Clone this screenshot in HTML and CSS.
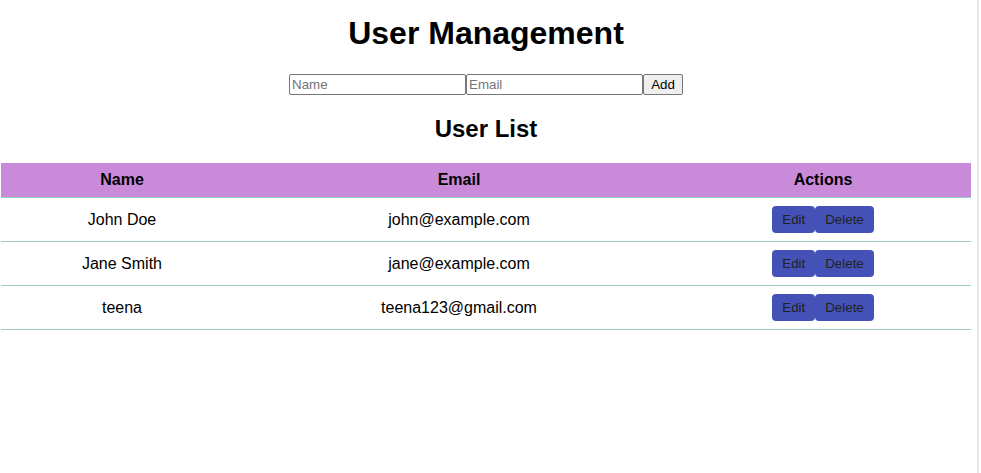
FILE: index.html
```html
<!DOCTYPE html>
<html lang="en">
<head>
<meta charset="utf-8">
<title>User Management</title>
<link rel="stylesheet" href="styles.css">
</head>
<body>
<div class="app">
  <h1 class="title">User Management</h1>
  <form class="add-form">
    <input class="field" type="text" placeholder="Name"><input class="field" type="email" placeholder="Email"><button class="add-btn" type="button">Add</button>
  </form>
  <h2 class="subtitle">User List</h2>
  <table class="users">
    <thead>
      <tr><th class="c-name">Name</th><th class="c-email">Email</th><th class="c-actions">Actions</th></tr>
    </thead>
    <tbody>
      <tr><td>John Doe</td><td>john@example.com</td><td><div class="actions"><button class="act">Edit</button><button class="act">Delete</button></div></td></tr>
      <tr><td>Jane Smith</td><td>jane@example.com</td><td><div class="actions"><button class="act">Edit</button><button class="act">Delete</button></div></td></tr>
      <tr><td>teena</td><td>teena123@gmail.com</td><td><div class="actions"><button class="act">Edit</button><button class="act">Delete</button></div></td></tr>
    </tbody>
  </table>
</div>
</body>
</html>
```
FILE: styles.css
```css
html, body {
  margin: 0;
  padding: 0;
  background: #ffffff;
}
body {
  font-family: "Liberation Sans", Arial, sans-serif;
  color: #000;
}
body::after {
  content: "";
  position: fixed;
  top: 0;
  bottom: 0;
  right: 2px;
  width: 2px;
  background: #e8e8e8;
}
.app {
  padding: 0 10px 0 1px;
  text-align: center;
}
.title {
  font-size: 32px;
  font-weight: bold;
  margin: 15px 0 22px;
}
.add-form {
  display: flex;
  justify-content: center;
  margin: 0;
}
.field {
  box-sizing: border-box;
  width: 177px;
  height: 21px;
  border: 1px solid #767676;
  border-radius: 2px;
  padding: 1px 2px;
  font-family: "Liberation Sans", Arial, sans-serif;
  font-size: 13.33px;
  color: #000;
  background: #fff;
  margin: 0;
}
.field::placeholder {
  color: #757575;
}
.add-btn {
  box-sizing: border-box;
  width: 40px;
  height: 21px;
  border: 1px solid #767676;
  border-radius: 2px;
  background: #efefef;
  font-family: "Liberation Sans", Arial, sans-serif;
  font-size: 13.33px;
  color: #000;
  padding: 1px 6px;
  margin: 0;
}
.subtitle {
  font-size: 24px;
  font-weight: bold;
  margin: 20px 0 20px;
}
.users {
  width: 970px;
  border-collapse: collapse;
  font-size: 16px;
}
.users th {
  background: #c98ada;
  font-weight: bold;
  padding: 8px;
  border-bottom: 1px solid #8fd6bc;
}
.users td {
  padding: 8px;
  border-bottom: 1px solid #9fcfc0;
  text-align: center;
}
.c-name { width: 226px; }
.c-email { width: 416px; }
.actions {
  display: flex;
  justify-content: center;
}
.act {
  background: #4451b6;
  color: #222;
  border: none;
  border-radius: 4px;
  font-family: "Liberation Sans", Arial, sans-serif;
  font-size: 13.33px;
  padding: 6px 10px;
  line-height: 15px;
  margin: 0;
}
```
